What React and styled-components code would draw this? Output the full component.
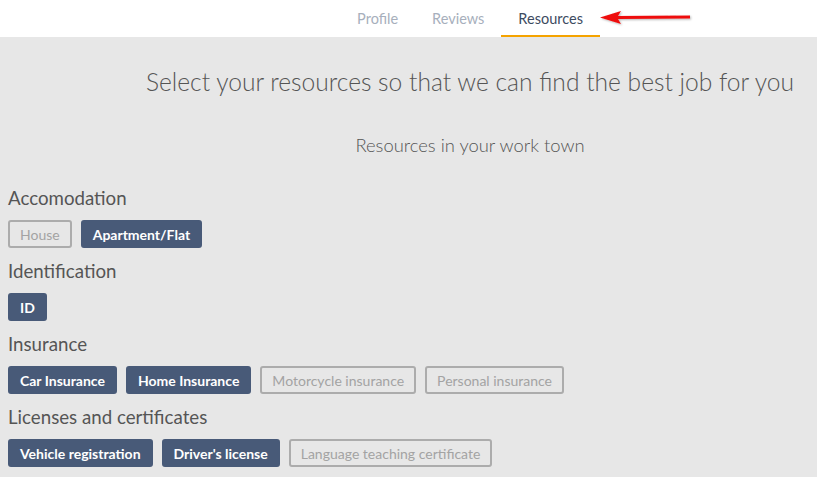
import React from "react";
import styled, { createGlobalStyle } from "styled-components";

const Global = createGlobalStyle`
  html, body { margin: 0; padding: 0; background: #e7e7e7; }
  body { font-family: Lato, "Open Sans", sans-serif; color: #555; }
  * { box-sizing: border-box; }
`;

const Page = styled.div`
  position: relative;
  width: 817px;
  height: 477px;
  overflow: hidden;
  background: #e7e7e7;
`;

const Header = styled.header`
  height: 37px;
  background: #fff;
  display: flex;
  justify-content: center;
  padding-left: 123px;
`;

const Tabs = styled.nav`
  display: flex;
  height: 100%;
`;

const Tab = styled.div`
  height: 100%;
  padding: 2px 17px 0;
  display: flex;
  align-items: center;
  font-size: 14.5px;
  color: ${(p) => (p.$active ? "#3d4b5f" : "#a7afbc")};
  border-bottom: 2px solid ${(p) => (p.$active ? "#f5a300" : "transparent")};
`;

const Column = styled.div`
  padding-left: 123px;
  display: flex;
  flex-direction: column;
  align-items: center;
`;

const Title = styled.h1`
  margin: 31px 0 0;
  font-size: 24.6px;
  font-weight: 300;
  color: #555;
  line-height: 28px;
`;

const Subtitle = styled.h2`
  margin: 39px 0 0;
  font-size: 18.4px;
  font-weight: 300;
  color: #555;
  line-height: 20px;
`;

const Sections = styled.div`
  padding: 32px 8px 0;
  display: flex;
  flex-direction: column;
  gap: 12px;
`;

const Section = styled.section`
  display: flex;
  flex-direction: column;
  gap: 11px;
`;

const Label = styled.div`
  font-size: 18.7px;
  line-height: 22px;
  color: #555;
`;

const Chips = styled.div`
  display: flex;
  gap: 9px;
`;

const Chip = styled.button`
  height: 28px;
  padding: 0 10px;
  border-radius: 3px;
  font-family: Lato, "Open Sans", sans-serif;
  font-size: 14px;
  font-weight: ${(p) => (p.$on ? 700 : 400)};
  color: ${(p) => (p.$on ? "#fff" : "#a3a3a3")};
  background: ${(p) => (p.$on ? "#485a78" : "transparent")};
  border: 2px solid ${(p) => (p.$on ? "#485a78" : "#acacac")};
  display: flex;
  align-items: center;
`;

const Arrow = styled.svg`
  position: absolute;
  left: 596px;
  top: 8px;
`;

const data = [
  { label: "Accomodation", items: [["House", false], ["Apartment/Flat", true]] },
  { label: "Identification", items: [["ID", true]] },
  {
    label: "Insurance",
    items: [
      ["Car Insurance", true],
      ["Home Insurance", true],
      ["Motorcycle insurance", false],
      ["Personal insurance", false],
    ],
  },
  {
    label: "Licenses and certificates",
    items: [
      ["Vehicle registration", true],
      ["Driver's license", true],
      ["Language teaching certificate", false],
    ],
  },
];

export default function App() {
  return (
    <Page>
      <Global />
      <Header>
        <Tabs>
          <Tab>Profile</Tab>
          <Tab>Reviews</Tab>
          <Tab $active>Resources</Tab>
        </Tabs>
      </Header>
      <Column>
        <Title>Select your resources so that we can find the best job for you</Title>
        <Subtitle>Resources in your work town</Subtitle>
      </Column>
      <Sections>
        {data.map((s) => (
          <Section key={s.label}>
            <Label>{s.label}</Label>
            <Chips>
              {s.items.map(([t, on]) => (
                <Chip key={t} $on={on}>{t}</Chip>
              ))}
            </Chips>
          </Section>
        ))}
      </Sections>
      <Arrow width="100" height="20" viewBox="0 0 100 20">
        <defs>
          <filter id="sh" x="-10%" y="-50%" width="120%" height="200%">
            <feDropShadow dx="1" dy="1" stdDeviation="1" floodColor="#000" floodOpacity="0.3" />
          </filter>
        </defs>
        <g filter="url(#sh)">
          <path d="M4 9.5 L25 3 L22 8 L94 7.5 L94 10.5 L22 11 L25 16 Z" fill="#ee1111" />
        </g>
      </Arrow>
    </Page>
  );
}
